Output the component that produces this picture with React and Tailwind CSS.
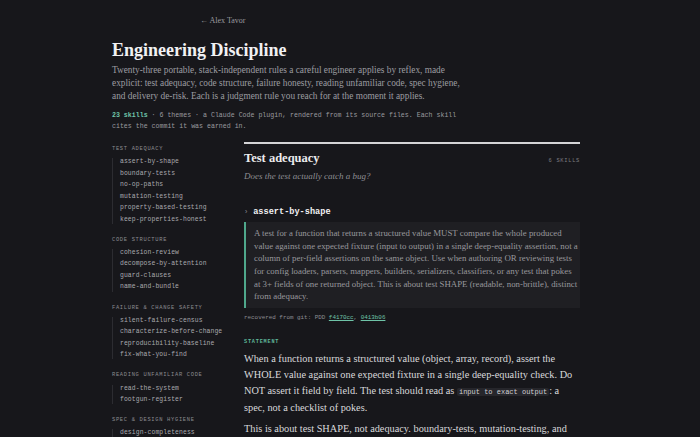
import React from 'react';

const serif = { fontFamily: '"Liberation Serif", "DejaVu Serif", serif' };

const themes = [
  { title: 'Test adequacy', skills: ['assert-by-shape', 'boundary-tests', 'no-op-paths', 'mutation-testing', 'property-based-testing', 'keep-properties-honest'] },
  { title: 'Code structure', skills: ['cohesion-review', 'decompose-by-attention', 'guard-clauses', 'name-and-bundle'] },
  { title: 'Failure & change safety', skills: ['silent-failure-census', 'characterize-before-change', 'reproducibility-baseline', 'fix-what-you-find'] },
  { title: 'Reading unfamiliar code', skills: ['read-the-system', 'footgun-register'] },
  { title: 'Spec & design hygiene', skills: ['design-completeness'] },
];

function Sidebar() {
  return (
    <nav className="flex w-[132px] shrink-0 flex-col gap-[12px] pt-[3px] font-['Liberation_Mono',monospace]">
      {themes.map((t) => (
        <div key={t.title}>
          <div className="text-[5.4px] uppercase tracking-[0.7px] text-[#8b8b90]">{t.title}</div>
          <ul className="mt-[5px] flex flex-col gap-[3.3px] border-l border-[#2c2c31] pl-[7px]">
            {t.skills.map((s) => (
              <li key={s} className="text-[6.4px] leading-[8.2px] tracking-[0.1px] text-[#a9a9ae]">{s}</li>
            ))}
          </ul>
        </div>
      ))}
    </nav>
  );
}

function Main() {
  return (
    <main className="w-[336px] shrink-0">
      <div className="h-[2px] bg-[#d4d4d6]" />
      <div className="mt-[5px] flex items-baseline justify-between">
        <h2 style={serif} className="text-[12.5px] font-bold text-[#ececee]">Test adequacy</h2>
        <span className="font-['Liberation_Mono',monospace] text-[5.4px] uppercase tracking-[0.7px] text-[#7d7d82]">6 skills</span>
      </div>
      <p style={serif} className="mt-[2px] text-[9px] italic text-[#8d8d92]">Does the test actually catch a bug?</p>

      <div className="mt-[23px] flex items-center gap-[5px] font-['Liberation_Mono',monospace]">
        <span className="text-[7px] text-[#8a8a8f]">›</span>
        <span className="text-[8.6px] font-bold text-[#f0f0f2]">assert-by-shape</span>
      </div>

      <blockquote style={serif} className="mt-[3px] border-l-2 border-[#4fa88c] bg-[#1f1f23] py-[5px] pl-[8px] pr-[2px] text-[8.8px] leading-[12.6px] text-[#98989d]">
        A test for a function that returns a structured value MUST compare the whole produced value against one expected fixture (input to output) in a single deep-equality assertion, not a column of per-field assertions on the same object. Use when authoring OR reviewing tests for config loaders, parsers, mappers, builders, serializers, classifiers, or any test that pokes at 3+ fields of one returned object. This is about test SHAPE (readable, non-brittle), distinct from adequacy.
      </blockquote>

      <div className="mt-[6px] font-['Liberation_Mono',monospace] text-[5.9px] text-[#8e8e93]">
        recovered from git: PDD <span className="text-[#6fc4a8] underline">f4170cc</span>, <span className="text-[#6fc4a8] underline">0413b06</span>
      </div>

      <div className="mt-[16px] font-['Liberation_Mono',monospace] text-[5.2px] font-bold uppercase tracking-[0.8px] text-[#5fb89a]">Statement</div>

      <p style={serif} className="mt-[5px] text-[10.3px] leading-[15.6px] text-[#d9d9dc]">
        When a function returns a structured value (object, array, record), assert the WHOLE value against one expected fixture in a single deep-equality check. Do NOT assert it field by field. The test should read as{' '}
        <code className="rounded-[2px] bg-[#26262b] px-[2px] font-['Liberation_Mono',monospace] text-[7px] text-[#d0d0d4]">input to exact output</code>: a spec, not a checklist of pokes.
      </p>
      <p style={serif} className="mt-[5px] text-[10.3px] leading-[15.6px] text-[#d9d9dc]">
        This is about test SHAPE, not adequacy. boundary-tests, mutation-testing, and property-based-testing ask whether a test catches bugs; this skill asks whether it reads as a specification.
      </p>
    </main>
  );
}

export default function App() {
  return (
    <div className="h-[437px] w-[700px] overflow-hidden bg-[#17171b]">
      <div className="pl-[112px] pt-[15px]">
        <a style={serif} className="ml-[88px] block text-[8px] text-[#9a9a9f]">← Alex Tavor</a>
        <h1 style={serif} className="mt-[11px] text-[18px] font-semibold leading-[24px] text-[#f1f1f3]">Engineering Discipline</h1>
        <p style={serif} className="mt-[2px] w-[352px] text-[9.3px] leading-[13px] text-[#9c9ca1]">
          Twenty-three portable, stack-independent rules a careful engineer applies by reflex, made
          <br />
          explicit: test adequacy, code structure, failure honesty, reading unfamiliar code, spec hygiene,
          <br />
          and delivery de-risk. Each is a judgment rule you reach for at the moment it applies.
        </p>
        <p className="mt-[8px] w-[350px] font-['Liberation_Mono',monospace] text-[6.6px] leading-[10.5px] text-[#9a9a9f]">
          <span className="font-bold text-[#6fc4a8]">23 skills</span> · 6 themes · a Claude Code plugin, rendered from its source files. Each skill cites the commit it was earned in.
        </p>
        <div className="mt-[10px] flex">
          <Sidebar />
          <Main />
        </div>
      </div>
    </div>
  );
}
